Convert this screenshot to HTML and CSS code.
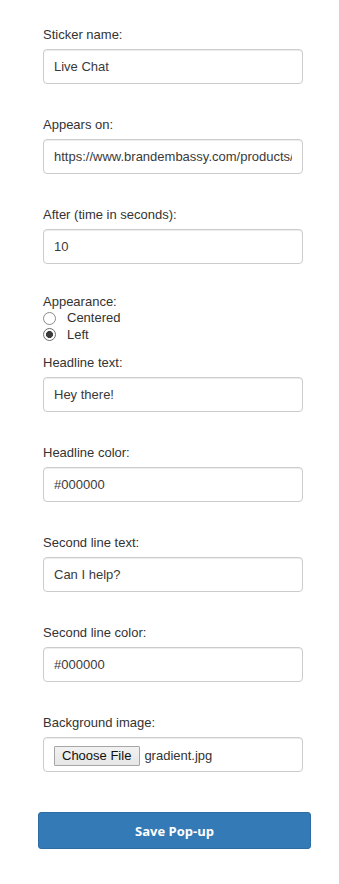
FILE: index.html
```html
<!DOCTYPE html>
<html lang="en">
<head>
<meta charset="utf-8">
<title>Sticker form</title>
<link rel="stylesheet" href="styles.css">
</head>
<body>
<form class="form">
  <div class="field">
    <label class="label" for="name">Sticker name:</label>
    <input class="input" id="name" type="text" value="Live Chat">
  </div>
  <div class="field">
    <label class="label" for="url">Appears on:</label>
    <input class="input" id="url" type="text" value="https://www.brandembassy.com/products/">
  </div>
  <div class="field">
    <label class="label" for="after">After (time in seconds):</label>
    <input class="input" id="after" type="text" value="10">
  </div>
  <div class="appearance">
    <div class="app-title">Appearance:</div>
    <label class="radio-row"><input class="radio" type="radio" name="app"><span>Centered</span></label>
    <label class="radio-row"><input class="radio" type="radio" name="app" checked><span>Left</span></label>
  </div>
  <div class="field">
    <label class="label" for="hl">Headline text:</label>
    <input class="input" id="hl" type="text" value="Hey there!">
  </div>
  <div class="field">
    <label class="label" for="hlc">Headline color:</label>
    <input class="input" id="hlc" type="text" value="#000000">
  </div>
  <div class="field">
    <label class="label" for="sl">Second line text:</label>
    <input class="input" id="sl" type="text" value="Can I help?">
  </div>
  <div class="field">
    <label class="label" for="slc">Second line color:</label>
    <input class="input" id="slc" type="text" value="#000000">
  </div>
  <div class="field last">
    <label class="label">Background image:</label>
    <div class="input file">
      <span class="file-btn">Choose File</span>
      <span class="file-name">gradient.jpg</span>
    </div>
  </div>
  <button class="save" type="button">Save Pop-up</button>
</form>
</body>
</html>
```
FILE: styles.css
```css
* { box-sizing: border-box; }
html, body { margin: 0; padding: 0; background: #fff; }
body {
  font-family: "Liberation Sans", Arial, sans-serif;
  font-size: 13px;
  color: #333;
}
.form {
  padding: 26px 0 40px 38px;
  width: 311px;
}
.field {
  padding-left: 5px;
  margin-bottom: 32px;
}
.field.last { margin-bottom: 40px; }
.label {
  display: block;
  line-height: 18px;
  height: 18px;
  margin-bottom: 5px;
  color: #333;
}
.input {
  display: block;
  width: 260px;
  height: 35px;
  padding: 0 10px;
  border: 1px solid #ccc;
  border-radius: 4px;
  box-shadow: inset 0 1px 1px rgba(0,0,0,.075);
  font-family: "Liberation Sans", Arial, sans-serif;
  font-size: 13px;
  color: #3a3a3a;
  background: #fff;
  outline: none;
}
.appearance {
  padding-left: 5px;
  margin-top: -2px;
  margin-bottom: 11px;
}
.app-title { line-height: 16px; height: 16px; }
.radio-row {
  display: flex;
  align-items: center;
  height: 16px;
  line-height: 16px;
}
.radio-row:last-child { height: 17px; }
.radio {
  appearance: none;
  -webkit-appearance: none;
  width: 13px;
  height: 13px;
  margin: 0 11px 0 0;
  border: 1px solid #8a8a8a;
  border-radius: 50%;
  background: #fff;
  flex: none;
}
.radio:checked {
  background: radial-gradient(circle, #3c3c3c 0 3.2px, #fff 3.8px);
  border-color: #6f6f6f;
}
.file {
  display: flex;
  align-items: flex-start;
  padding: 8px 10px 0 10px;
  color: #333;
}
.file-btn {
  display: block;
  height: 20px;
  line-height: 18px;
  padding: 0 8px 0 7px;
  border: 1px solid #a6a6a6;
  border-radius: 1px;
  background: linear-gradient(#f2f2f2, #e6e6e6);
  color: #111;
}
.file-name {
  line-height: 20px;
  margin-left: 4px;
  color: #333;
}
.save {
  display: block;
  width: 273px;
  height: 37px;
  border: 1px solid #2e6da4;
  border-radius: 3px;
  background: #337ab7;
  color: #fff;
  font-family: "Open Sans", "Noto Sans", sans-serif;
  font-weight: 700;
  font-size: 13px;
  padding: 0;
}
```
